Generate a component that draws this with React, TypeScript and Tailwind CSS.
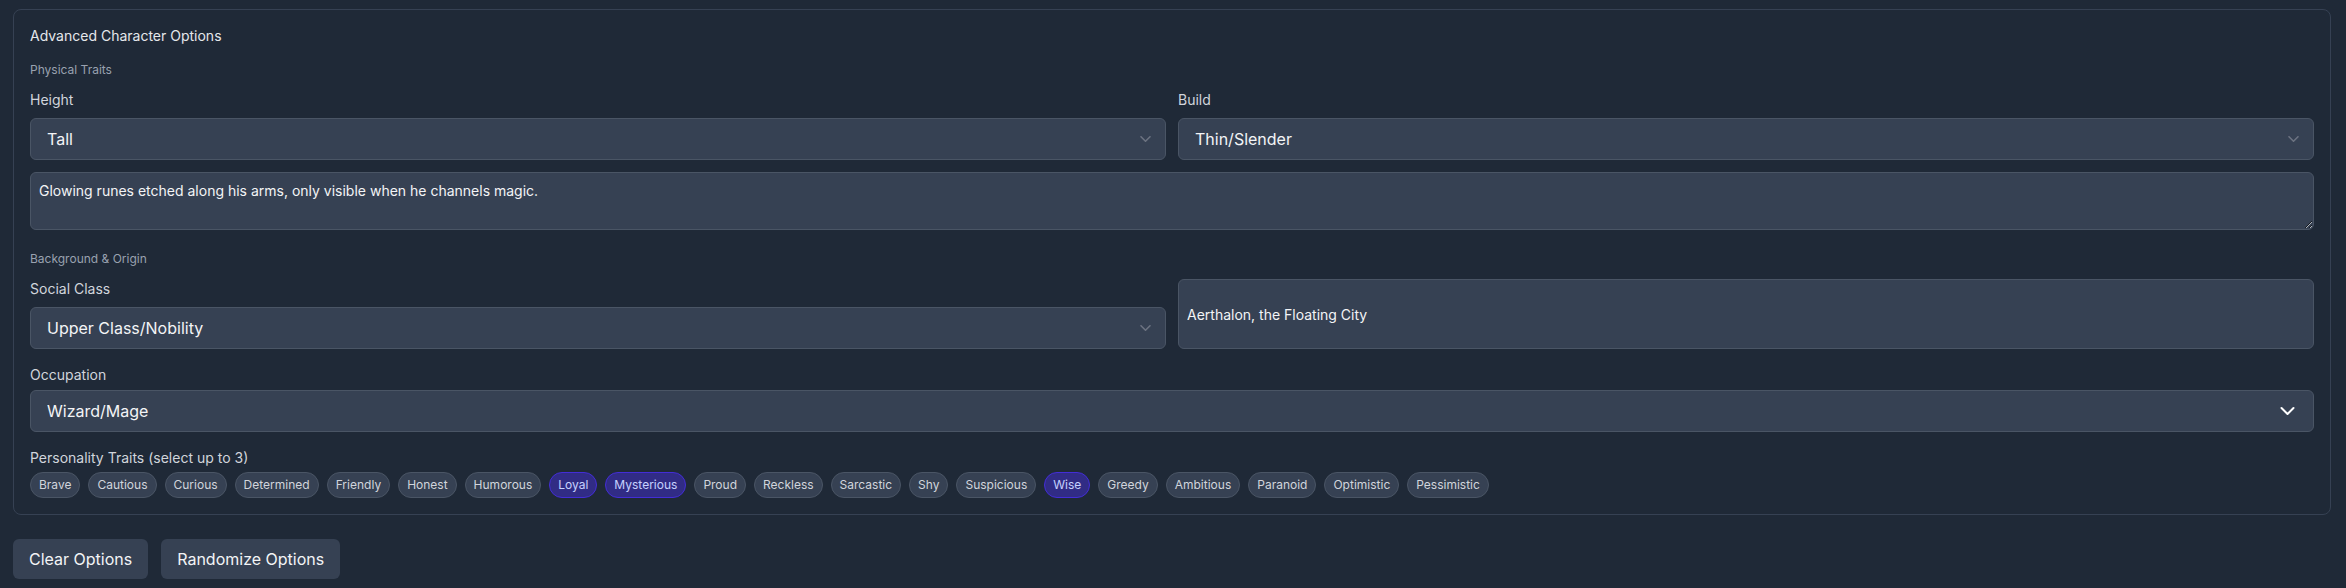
import React from 'react';

const TRAITS = [
  'Brave',
  'Cautious',
  'Curious',
  'Determined',
  'Friendly',
  'Honest',
  'Humorous',
  'Loyal',
  'Mysterious',
  'Proud',
  'Reckless',
  'Sarcastic',
  'Shy',
  'Suspicious',
  'Wise',
  'Greedy',
  'Ambitious',
  'Paranoid',
  'Optimistic',
  'Pessimistic',
];

const SELECTED = ['Loyal', 'Mysterious', 'Wise'];

function SmallChevron() {
  return (
    <svg
      className="pointer-events-none absolute right-[15px] top-1/2 -translate-y-1/2"
      width="11"
      height="7"
      viewBox="0 0 11 7"
      fill="none"
    >
      <path d="M1 1.2l4.5 4.5 4.5-4.5" stroke="#6b7280" strokeWidth="1.6" strokeLinecap="round" strokeLinejoin="round" />
    </svg>
  );
}

function BigChevron() {
  return (
    <svg
      className="pointer-events-none absolute right-[19px] top-1/2 -translate-y-1/2"
      width="15"
      height="9"
      viewBox="0 0 15 9"
      fill="none"
    >
      <path d="M1.5 1.5l6 6 6-6" stroke="#ffffff" strokeWidth="2" strokeLinecap="round" strokeLinejoin="round" />
    </svg>
  );
}

function Select({ value, big }: { value: string; big?: boolean }) {
  return (
    <div className="relative">
      <select
        defaultValue={value}
        className="block h-[42px] w-full appearance-none rounded-md border border-gray-600 bg-gray-700 px-4 text-base text-gray-100 outline-none"
      >
        <option>{value}</option>
      </select>
      {big ? <BigChevron /> : <SmallChevron />}
    </div>
  );
}

function Label({ children, className = '' }: { children: React.ReactNode; className?: string }) {
  return <label className={`block text-sm leading-5 text-gray-300 ${className}`}>{children}</label>;
}

export default function App() {
  return (
    <div
      className="min-h-screen bg-[#1f2937] pt-[9px]"
      style={{ fontFamily: 'Inter, "Noto Sans", sans-serif' }}
    >
      {/* Options card */}
      <div className="ml-[13px] w-[2318px] rounded-lg border border-gray-700 p-4">
        <h3 className="mb-4 text-sm leading-5 text-gray-200">Advanced Character Options</h3>

        {/* Physical Traits */}
        <h4 className="mb-3 text-xs leading-4 text-gray-400">Physical Traits</h4>
        <div className="grid grid-cols-2 gap-3">
          <div>
            <Label className="mb-2">Height</Label>
            <Select value="Tall" />
          </div>
          <div>
            <Label className="mb-2">Build</Label>
            <Select value="Thin/Slender" />
          </div>
        </div>
        <textarea
          rows={2}
          defaultValue="Glowing runes etched along his arms, only visible when he channels magic."
          className="mt-3 block h-[58px] w-full rounded-md border border-gray-600 bg-gray-700 p-2 text-sm leading-5 text-gray-100 outline-none"
        />

        {/* Background & Origin */}
        <h4 className="mb-3 mt-[21px] text-xs leading-4 text-gray-400">Background &amp; Origin</h4>
        <div className="grid grid-cols-2 gap-3">
          <div>
            <Label className="mb-2">Social Class</Label>
            <Select value="Upper Class/Nobility" />
          </div>
          <input
            defaultValue="Aerthalon, the Floating City"
            className="block h-full w-full self-stretch rounded-md border border-gray-600 bg-gray-700 px-2 text-sm text-gray-100 outline-none"
          />
        </div>

        <div className="mt-4">
          <Label className="mb-[5px]">Occupation</Label>
          <Select value="Wizard/Mage" big />
        </div>

        {/* Personality */}
        <div className="mt-4">
          <Label className="mb-1">Personality Traits (select up to 3)</Label>
          <div className="flex flex-wrap gap-2">
            {TRAITS.map((t) =>
              SELECTED.includes(t) ? (
                <button
                  key={t}
                  className="rounded-full border border-indigo-700 bg-indigo-900 px-2 py-1 text-xs leading-4 text-indigo-200"
                >
                  {t}
                </button>
              ) : (
                <button
                  key={t}
                  className="rounded-full border border-gray-600 bg-gray-700 px-2 py-1 text-xs leading-4 text-gray-300"
                >
                  {t}
                </button>
              )
            )}
          </div>
        </div>
      </div>

      {/* Actions */}
      <div className="ml-[13px] mt-6 flex gap-[13px]">
        <button className="rounded-md bg-gray-700 px-4 py-2 text-base leading-6 text-gray-100">Clear Options</button>
        <button className="rounded-md bg-gray-700 px-4 py-2 text-base leading-6 text-gray-100">
          Randomize Options
        </button>
      </div>
    </div>
  );
}
